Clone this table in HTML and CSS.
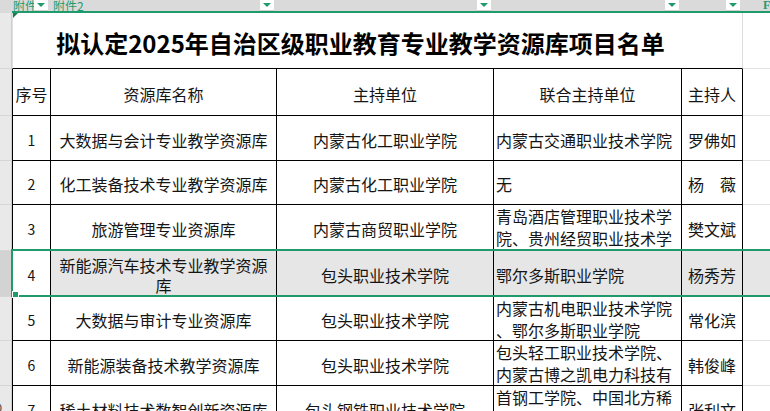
FILE: index.html
```html
<!DOCTYPE html>
<html lang="zh-CN">
<head>
<meta charset="utf-8">
<title>拟认定2025年自治区级职业教育专业教学资源库项目名单</title>
<link rel="stylesheet" href="styles.css">
</head>
<body>
<div class="sheet">
  <div class="topbar">
    <div class="tb-gutter"></div>
    <div class="tb-cell"><span class="tb-label">附件</span><span class="dd"></span></div>
    <div class="tb-cell"><span class="tb-label pad2">附件2</span><span class="dd"></span></div>
    <div class="tb-cell"><span class="dd"></span></div>
    <div class="tb-cell"><span class="dd"></span></div>
    <div class="tb-cell"><span class="dd"></span></div>
    <div class="tb-cell tb-extra"><span class="tb-f">F</span></div>
  </div>

  <div class="grid">
    <!-- title row -->
    <div class="g"></div>
    <div class="title">拟认定2025年自治区级职业教育专业教学资源库项目名单</div>
    <div class="x x-title"></div>

    <!-- header row -->
    <div class="g"></div>
    <div class="c c1">序号</div>
    <div class="c">资源库名称</div>
    <div class="c">主持单位</div>
    <div class="c">联合主持单位</div>
    <div class="c">主持人</div>
    <div class="x"></div>

    <!-- row 1 -->
    <div class="g"></div>
    <div class="c c1 num">1</div>
    <div class="c">大数据与会计专业教学资源库</div>
    <div class="c">内蒙古化工职业学院</div>
    <div class="c c4">内蒙古交通职业技术学院</div>
    <div class="c">罗佛如</div>
    <div class="x"></div>

    <!-- row 2 -->
    <div class="g"></div>
    <div class="c c1 num">2</div>
    <div class="c">化工装备技术专业教学资源库</div>
    <div class="c">内蒙古化工职业学院</div>
    <div class="c c4">无</div>
    <div class="c">杨　薇</div>
    <div class="x"></div>

    <!-- row 3 -->
    <div class="g"></div>
    <div class="c c1 num">3</div>
    <div class="c">旅游管理专业资源库</div>
    <div class="c">内蒙古商贸职业学院</div>
    <div class="c c4 ovf"><span>青岛酒店管理职业技术学<br>院、贵州经贸职业技术学<br>院</span></div>
    <div class="c">樊文斌</div>
    <div class="x"></div>

    <!-- row 4 (selected) -->
    <div class="g g-sel"></div>
    <div class="c c1 num">4</div>
    <div class="c sel"><span>新能源汽车技术专业教学资源<br>库</span></div>
    <div class="c sel">包头职业技术学院</div>
    <div class="c c4 sel">鄂尔多斯职业学院</div>
    <div class="c sel">杨秀芳</div>
    <div class="x sel"></div>

    <!-- row 5 -->
    <div class="g"></div>
    <div class="c c1 num">5</div>
    <div class="c">大数据与审计专业资源库</div>
    <div class="c">包头职业技术学院</div>
    <div class="c c4 ovf"><span>内蒙古机电职业技术学院<br>、鄂尔多斯职业学院</span></div>
    <div class="c">常化滨</div>
    <div class="x"></div>

    <!-- row 6 -->
    <div class="g"></div>
    <div class="c c1 num">6</div>
    <div class="c">新能源装备技术教学资源库</div>
    <div class="c">包头职业技术学院</div>
    <div class="c c4 ovf"><span>包头轻工职业技术学院、<br>内蒙古博之凯电力科技有<br>限公司</span></div>
    <div class="c">韩俊峰</div>
    <div class="x"></div>

    <!-- row 7 -->
    <div class="g g-num">10</div>
    <div class="c c1 num">7</div>
    <div class="c">稀土材料技术数智创新资源库</div>
    <div class="c">包头钢铁职业技术学院</div>
    <div class="c c4 ovf"><span>首钢工学院、中国北方稀<br>土（集团）高科技股份有<br>限公司</span></div>
    <div class="c">张利文</div>
    <div class="x"></div>
  </div>

  <div class="selection"><span class="handle"></span></div>
</div>
</body>
</html>
```

FILE: styles.css
```css
* {
  box-sizing: border-box;
  margin: 0;
  padding: 0;
}

html, body {
  width: 770px;
  height: 411px;
  overflow: hidden;
  background: #fff;
}

body {
  font-family: "Noto Sans CJK SC", "Noto Sans", sans-serif;
  color: #111;
}

.sheet {
  position: relative;
  width: 770px;
  height: 411px;
  overflow: hidden;
}

/* ---------- filter bar ---------- */
.topbar {
  display: grid;
  grid-template-columns: 12px 39px 226px 217px 188px 61px 27px;
  height: 13px;
  background: #dadada;
}

.tb-gutter {
  background: #dadada;
}

.tb-cell {
  position: relative;
  height: 13px;
  border-bottom: 2px solid #1f9a6b;
  overflow: hidden;
}

.tb-label {
  display: block;
  padding-left: 1px;
  font-size: 12px;
  line-height: 11px;
  color: #1f9a6b;
  white-space: nowrap;
}

.tb-label.pad2 {
  padding-left: 2px;
}

.dd {
  position: absolute;
  right: 3px;
  top: 0;
  width: 14px;
  height: 11px;
  background: #fff;
  border-bottom: 1px solid #cfcfcf;
}

.dd::after {
  content: "";
  position: absolute;
  left: 3px;
  top: 3px;
  border-left: 4px solid transparent;
  border-right: 4px solid transparent;
  border-top: 4px solid #1f9a6b;
}

.tb-extra {
  padding-left: 20px;
}

.tb-f {
  display: block;
  font-family: "Liberation Serif", serif;
  font-weight: 700;
  font-size: 12px;
  line-height: 11px;
  color: #1f9a6b;
}

/* ---------- sheet grid ---------- */
.grid {
  display: grid;
  grid-template-columns: 12px 39px 226px 217px 188px 61px 27px;
  grid-template-rows: 56px 47px 45px 44px 46px 46px 44px 45px 45px;
}

.g {
  background: #e9e9e9;
  border-right: 1px solid #cfcfcf;
  border-bottom: 1px solid #d6d6d6;
}

.g-sel {
  background: #d3d3d3;
}

.g-num {
  display: flex;
  justify-content: flex-end;
  align-items: center;
  padding-right: 9px;
  font-family: "Liberation Sans", sans-serif;
  font-size: 11px;
  color: #333;
  white-space: nowrap;
  overflow: hidden;
}

.title {
  grid-column: span 5;
  position: relative;
  display: flex;
  align-items: center;
  justify-content: center;
  padding: 3px 34px 0 0;
  border-left: 1px solid #e0e0e0;
  border-right: 1px solid #dcdcdc;
  border-bottom: 1px solid #000;
  font-size: 24px;
  font-weight: 700;
  color: #000;
  white-space: nowrap;
}

.title::before {
  content: "";
  position: absolute;
  left: 0;
  top: 0;
  border-top: 5px solid #1b7a4e;
  border-right: 5px solid transparent;
}

.x {
  border-bottom: 1px solid #e2e2e2;
}

.x-title {
  border-bottom: 1px solid #e2e2e2;
}

.c {
  display: flex;
  align-items: center;
  justify-content: center;
  padding-top: 3px;
  border-right: 1px solid #000;
  border-bottom: 1px solid #000;
  font-size: 16px;
  line-height: 20px;
  text-align: center;
  white-space: nowrap;
  overflow: hidden;
  color: #151515;
}

.c1 {
  border-left: 1px solid #000;
}

.num {
  font-size: 14px;
}

.c4 {
  justify-content: flex-start;
  text-align: left;
  padding-left: 2px;
  line-height: 22px;
}

.c4.ovf {
  align-items: flex-start;
  padding-top: 0;
}

.sel {
  background: #e6e6e6;
}

/* ---------- selection overlay ---------- */
.selection {
  position: absolute;
  left: 11px;
  top: 249px;
  width: 780px;
  height: 48px;
  border: 2px solid #1f9a6b;
  border-right: none;
  pointer-events: none;
}

.handle {
  position: absolute;
  left: -1px;
  top: 40px;
  width: 7px;
  height: 7px;
  background: #1f9a6b;
  border: 1px solid #fff;
}
```
